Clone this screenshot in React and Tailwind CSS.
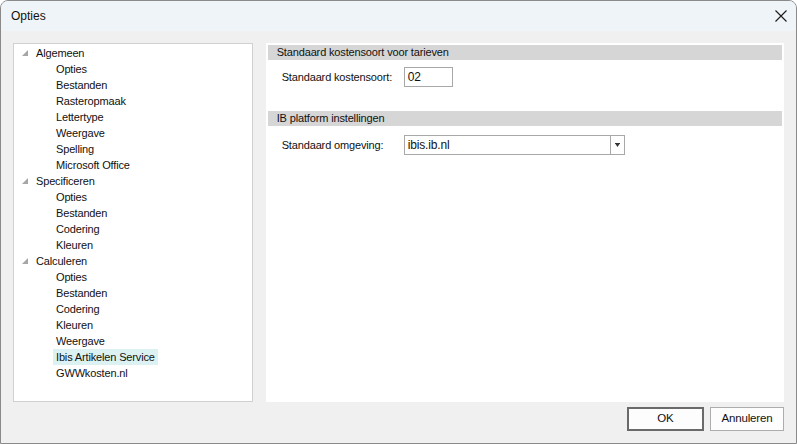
import React from "react";

const font = { fontFamily: '"Liberation Sans", Arial, sans-serif' };

function Tri() {
  return (
    <svg width="6" height="6" viewBox="0 0 6 6" className="shrink-0">
      <polygon points="6,0 6,6 0,6" fill="#a6a6a6" />
    </svg>
  );
}

const tree = [
  { label: "Algemeen", children: ["Opties", "Bestanden", "Rasteropmaak", "Lettertype", "Weergave", "Spelling", "Microsoft Office"] },
  { label: "Specificeren", children: ["Opties", "Bestanden", "Codering", "Kleuren"] },
  { label: "Calculeren", children: ["Opties", "Bestanden", "Codering", "Kleuren", "Weergave", "Ibis Artikelen Service", "GWWkosten.nl"] },
];

export default function App() {
  return (
    <div
      style={font}
      className="w-[797px] h-[444px] flex flex-col bg-[#f0f0f0] border border-[#8a8a8a] rounded-t-[8px] overflow-hidden text-[11px] text-[#111] tracking-[-0.15px]"
    >
      <div className="h-[30px] shrink-0 bg-[#eff4f9] flex items-center justify-between pl-[10px] pr-[9px]">
        <span className="text-[12px] tracking-normal">Opties</span>
        <svg width="12" height="12" viewBox="0 0 12 12">
          <path d="M0.5 0.5 L11.5 11.5 M11.5 0.5 L0.5 11.5" stroke="#1a1a1a" strokeWidth="1.1" />
        </svg>
      </div>
      <div className="flex-1 flex flex-col px-[12px] pt-[12px] pb-[12px]">
        <div className="flex gap-[13px] h-[359px]">
          <div className="w-[240px] h-full bg-white border border-[#d0d0d0] pt-[1px]">
            {tree.map((g) => (
              <div key={g.label}>
                <div className="h-[16px] flex items-center pl-[8px]">
                  <Tri />
                  <span className="ml-[8px]">{g.label}</span>
                </div>
                {g.children.map((c) => (
                  <div key={c} className="h-[16px] flex items-center pl-[42px]">
                    <span
                      className={
                        c === "Ibis Artikelen Service"
                          ? "bg-[#dcf2f2] px-[3px] -ml-[3px] h-[16px] flex items-center"
                          : ""
                      }
                    >
                      {c}
                    </span>
                  </div>
                ))}
              </div>
            ))}
          </div>
          <div className="w-[519px] h-full bg-white p-[2px]">
            <div className="h-[15px] bg-[#d6d6d6] flex items-center pl-[9px]">
              Standaard kostensoort voor tarieven
            </div>
            <div className="flex items-center mt-[7px] h-[20px] pl-[14px]">
              <span className="w-[122px]">Standaard kostensoort:</span>
              <div className="w-[49px] h-[20px] border border-[#a8a8a8] flex items-center pl-[3px] text-[12px]">02</div>
            </div>
            <div className="h-[15px] bg-[#d6d6d6] flex items-center pl-[9px] mt-[24px]">
              IB platform instellingen
            </div>
            <div className="flex items-center mt-[9px] h-[20px] pl-[14px]">
              <span className="w-[122px]">Standaard omgeving:</span>
              <div className="w-[221px] h-[20px] border border-[#a8a8a8] flex items-center">
                <span className="flex-1 pl-[3px] text-[12px]">ibis.ib.nl</span>
                <div className="w-[14px] h-full border-l border-[#a8a8a8] flex items-center justify-center">
                  <svg width="5" height="4" viewBox="0 0 5 4">
                    <rect x="0" y="0" width="5" height="1" fill="#333" />
                    <polygon points="0.5,1 4.5,1 2.5,4" fill="#333" />
                  </svg>
                </div>
              </div>
            </div>
          </div>
        </div>
        <div className="flex justify-end gap-[6px] mt-[5px]">
          <button className="w-[77px] h-[24px] bg-[#fdfdfd] border-2 border-[#6a6a6a] text-[11.5px]">OK</button>
          <button className="w-[74px] h-[24px] bg-[#fdfdfd] border border-[#adadad] text-[11.5px]">Annuleren</button>
        </div>
      </div>
    </div>
  );
}
